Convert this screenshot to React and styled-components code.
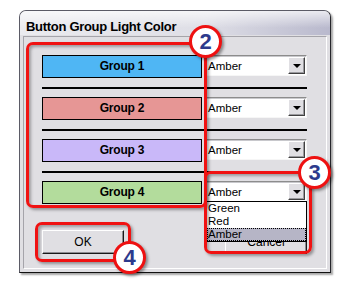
import React from "react";
import styled, { createGlobalStyle, css } from "styled-components";

const GlobalStyle = createGlobalStyle`
  html, body {
    margin: 0;
    padding: 0;
    background: #fff;
  }
  body {
    width: 350px;
    height: 285px;
    overflow: hidden;
    font-family: "Liberation Sans", Arial, sans-serif;
  }
`;

const Page = styled.div`
  position: relative;
  width: 350px;
  height: 285px;
  padding: 10px 0 0 19px;
  box-sizing: border-box;
`;

const Window = styled.div`
  width: 312px;
  height: 263px;
  box-sizing: border-box;
  display: flex;
  flex-direction: column;
  border: 1px solid #5b5b66;
  border-right-color: #26262c;
  border-bottom-color: #111;
  border-radius: 7px 7px 0 0;
  background: #e0dfe3;
  box-shadow: 2px 2px 2px rgba(0, 0, 0, 0.35);
`;

const TitleBar = styled.div`
  height: 24px;
  box-sizing: border-box;
  display: flex;
  align-items: flex-end;
  padding: 0 0 1px 6px;
  border-radius: 6px 6px 0 0;
  background: linear-gradient(to bottom, rgba(255, 255, 255, 0.7), rgba(255, 255, 255, 0) 70%),
    linear-gradient(to right, #ebebef, #dedee6 60%, #b9b9cd);
  font-size: 13px;
  font-weight: bold;
  letter-spacing: -0.3px;
  line-height: 15px;
  color: #000;
`;

const Client = styled.div`
  flex: 1;
  margin: 1px 3px 3px;
  border: 1px solid;
  border-color: #a5a4aa #fff #fff #a5a4aa;
  padding: 18px 0 0 18px;
`;

const Row = styled.div`
  display: flex;
  align-items: flex-start;
  gap: 3px;
`;

const GroupButton = styled.div`
  width: 160px;
  height: 23px;
  box-sizing: border-box;
  border: 1px solid #000;
  background: ${(p) => p.$color};
  font-size: 12px;
  font-weight: bold;
  letter-spacing: -0.2px;
  line-height: 21px;
  text-align: center;
  color: #000;
`;

const Rule = styled.div`
  width: 265px;
  height: 2px;
  margin: 9px 0 8px;
  background: #000;
`;

const Combo = styled.div`
  position: relative;
  width: 102px;
  height: 21px;
  box-sizing: border-box;
  display: flex;
  align-items: center;
  padding-left: 2px;
  border: 1px solid;
  border-color: #8c8c8c #f6f6f6 #f6f6f6 #8c8c8c;
  box-shadow: inset 1px 1px 0 #c8c8cc;
  background: #fff;
  font-size: 11.5px;
  color: #000;
`;

const ComboButton = styled.div`
  position: absolute;
  right: 1px;
  top: 1px;
  width: 17px;
  height: 17px;
  box-sizing: border-box;
  display: flex;
  align-items: center;
  justify-content: center;
  background: #e0dfe3;
  border: 1px solid;
  border-color: #fff #404040 #404040 #fff;
  box-shadow: inset -1px -1px 0 #9a9a9e;
`;

const Arrow = styled.div`
  width: 0;
  height: 0;
  border-left: 4px solid transparent;
  border-right: 4px solid transparent;
  border-top: 4px solid #000;
`;

const List = styled.div`
  position: absolute;
  left: 0;
  top: 100%;
  width: 101px;
  box-sizing: border-box;
  border: 1px solid #000;
  background: #fff;
  z-index: 2;
`;

const Option = styled.div`
  height: 13px;
  line-height: 13px;
  padding-left: 1px;
  font-size: 11.5px;
  color: #000;
  ${(p) =>
    p.$selected &&
    css`
      background: #b6b5c6;
      outline: 1px dotted #000;
      outline-offset: -1px;
    `}
`;

const Footer = styled.div`
  display: flex;
  justify-content: space-between;
  width: 265px;
  margin-top: 26px;
`;

const PushButton = styled.div`
  width: 82px;
  height: 24px;
  box-sizing: border-box;
  display: flex;
  align-items: center;
  justify-content: center;
  border: 1px solid;
  border-color: #fff #1a1a1a #1a1a1a #fff;
  box-shadow: inset -1px -1px 0 #8d8d92;
  background: #e0dfe3;
  font-size: 12px;
  color: #000;
`;

const Callout = styled.div`
  position: absolute;
  left: ${(p) => p.$x}px;
  top: ${(p) => p.$y}px;
  width: ${(p) => p.$w}px;
  height: ${(p) => p.$h}px;
  box-sizing: border-box;
  border: 3px solid #f01212;
  border-radius: 7px;
  box-shadow: 2px 2px 3px rgba(0, 0, 0, 0.35), inset 2px 2px 3px rgba(0, 0, 0, 0.3);
  pointer-events: none;
  z-index: 5;
`;

const Badge = styled.div`
  position: absolute;
  left: ${(p) => p.$x - 16}px;
  top: ${(p) => p.$y - 16}px;
  width: 33px;
  height: 33px;
  box-sizing: border-box;
  display: flex;
  align-items: center;
  justify-content: center;
  border: 3px solid #ee1111;
  border-radius: 50%;
  background: #fff;
  box-shadow: 2px 2px 3px rgba(0, 0, 0, 0.4);
  font-size: 22px;
  font-weight: bold;
  color: #2d3a8c;
  z-index: 6;
`;

const groups = [
  { name: "Group 1", color: "#4fb6f4" },
  { name: "Group 2", color: "#e69695" },
  { name: "Group 3", color: "#c9b8f9" },
  { name: "Group 4", color: "#b3dc9c" },
];

export default function App() {
  return (
    <>
      <GlobalStyle />
      <Page>
        <Window>
          <TitleBar>Button Group Light Color</TitleBar>
          <Client>
            {groups.map((g, i) => (
              <React.Fragment key={g.name}>
                {i > 0 && <Rule />}
                <Row>
                  <GroupButton $color={g.color}>{g.name}</GroupButton>
                  <Combo>
                    Amber
                    <ComboButton>
                      <Arrow />
                    </ComboButton>
                    {i === 3 && (
                      <List>
                        <Option>Green</Option>
                        <Option>Red</Option>
                        <Option $selected>Amber</Option>
                      </List>
                    )}
                  </Combo>
                </Row>
              </React.Fragment>
            ))}
            <Footer>
              <PushButton>OK</PushButton>
              <PushButton>Cancel</PushButton>
            </Footer>
          </Client>
        </Window>

        {/* annotation overlays */}
        <Callout $x={26} $y={42} $w={181} $h={166} />
        <Callout $x={204} $y={171} $w={108} $h={83} />
        <Callout $x={35} $y={222} $w={96} $h={40} />
        <Badge $x={205} $y={41}>2</Badge>
        <Badge $x={314} $y={172}>3</Badge>
        <Badge $x={129} $y={257}>4</Badge>
      </Page>
    </>
  );
}
